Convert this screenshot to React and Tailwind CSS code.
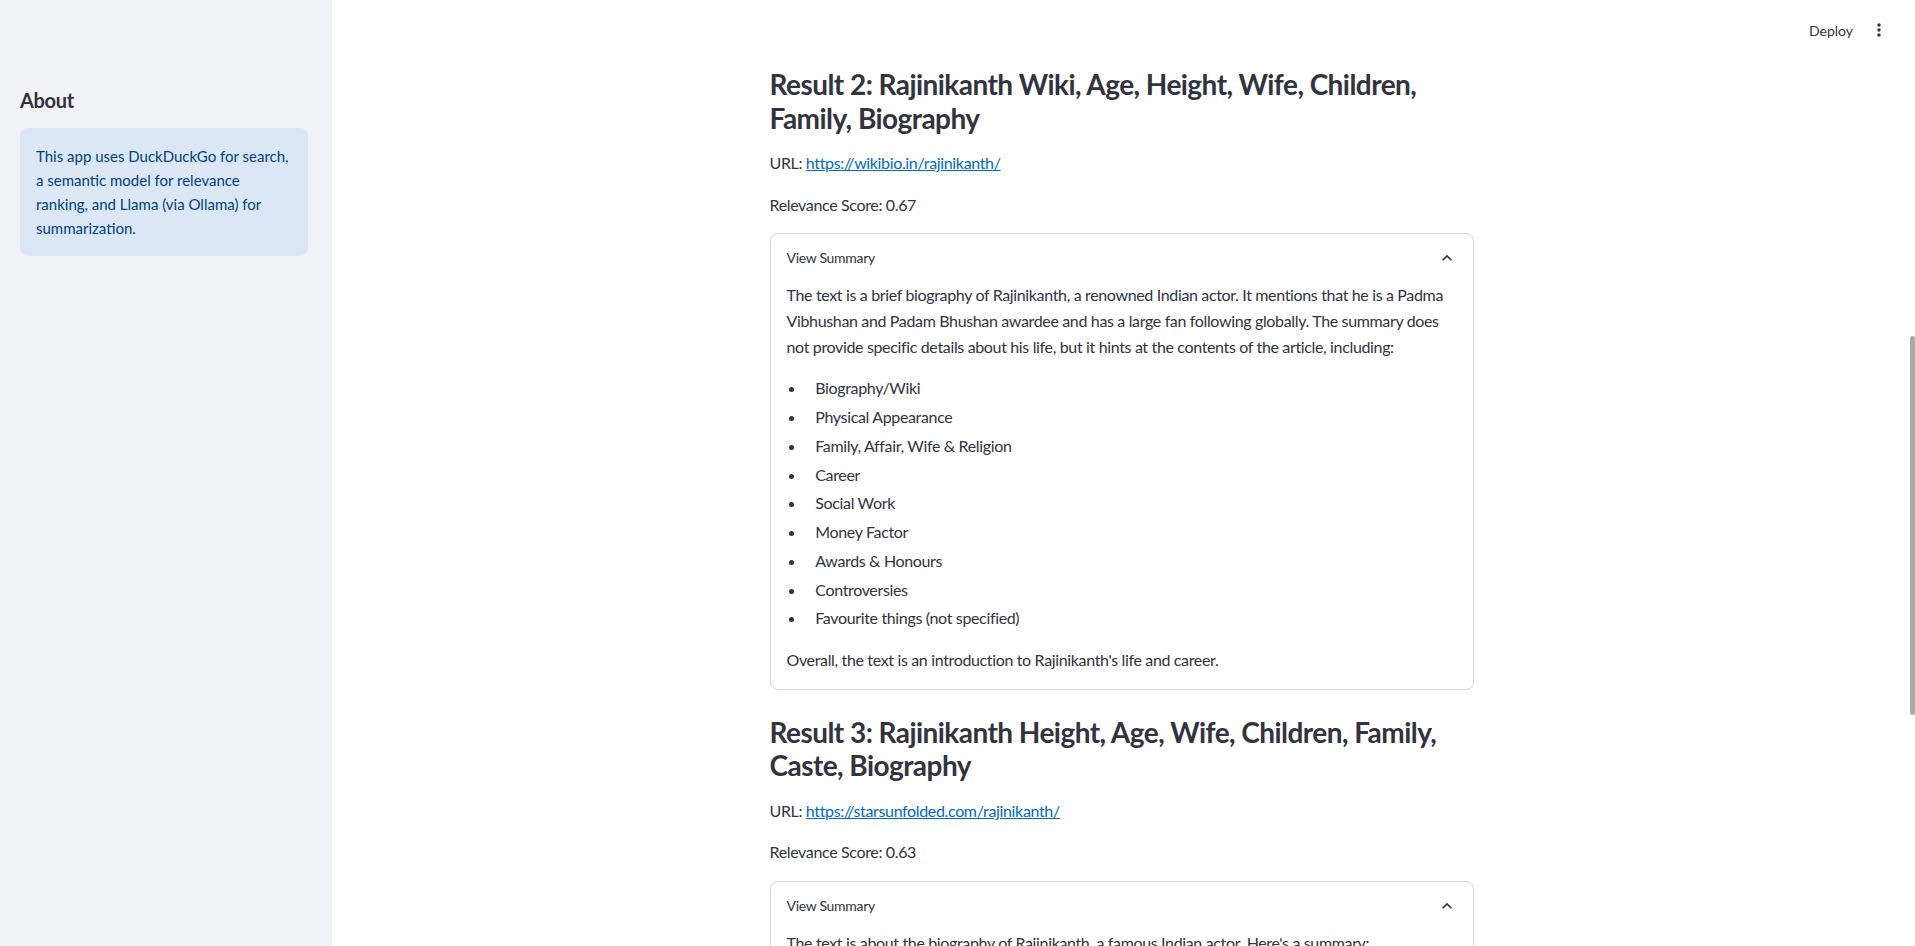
import React from "react";

const FONT = { fontFamily: 'Lato, "Noto Sans", "Liberation Sans", sans-serif' };

function Chevron() {
  return (
    <svg width="20" height="20" viewBox="0 0 24 24" fill="#31333f">
      <path d="M12 8l-6 6 1.41 1.41L12 10.83l4.59 4.58L18 14z" />
    </svg>
  );
}

function MoreVert() {
  return (
    <svg width="20" height="20" viewBox="0 0 24 24" fill="#31333f">
      <path d="M12 8c1.1 0 2-.9 2-2s-.9-2-2-2-2 .9-2 2 .9 2 2 2zm0 2c-1.1 0-2 .9-2 2s.9 2 2 2 2-.9 2-2-.9-2-2-2zm0 6c-1.1 0-2 .9-2 2s.9 2 2 2 2-.9 2-2-.9-2-2-2z" />
    </svg>
  );
}

function Expander({ children }) {
  return (
    <div className="rounded-lg border border-[#d6d6d9] bg-white">
      <div className="flex items-center justify-between px-4 pt-3 pb-3">
        <span className="text-[14px] leading-[24px] tracking-[-0.3px] text-[#31333f]">View Summary</span>
        <Chevron />
      </div>
      <div className="px-4 pb-4 text-[16px] leading-[25.6px] tracking-[-0.35px] text-[#31333f]">{children}</div>
    </div>
  );
}

function Bullets({ items }) {
  return (
    <ul className="mb-4 list-disc pl-0">
      {items.map((t) => (
        <li key={t} className="my-[3.2px] ml-[19.2px] pl-[9.6px]">
          {t}
        </li>
      ))}
    </ul>
  );
}

function Result({ title, url, score, children }) {
  return (
    <>
      <h3 className="pt-[10px] text-[28px] font-bold leading-[33.6px] tracking-[-0.55px] text-[#31333f]">{title}</h3>
      <p className="-mt-px text-[16px] leading-[25.6px] tracking-[-0.35px] text-[#31333f]">
        URL:{" "}
        <a href={url} className="text-[#0068c9] underline">
          {url}
        </a>
      </p>
      <p className="text-[16px] leading-[25.6px] tracking-[-0.35px] text-[#31333f]">Relevance Score: {score}</p>
      <Expander>{children}</Expander>
    </>
  );
}

export default function App() {
  return (
    <div className="flex h-[946px] w-full overflow-hidden bg-white" style={FONT}>
      <aside className="w-[332px] shrink-0 bg-[#f0f2f6] pl-5 pr-6 pt-[86px]">
        <h2 className="text-[20px] font-bold leading-[28px] tracking-[-0.3px] text-[#31333f]">About</h2>
        <div className="mt-[14px] rounded-lg bg-[#dbe7f4] px-4 py-4 text-[15px] leading-[24px] text-[#004280]">
          This app uses DuckDuckGo for search, a semantic model for relevance ranking, and Llama (via Ollama) for
          summarization.
        </div>
      </aside>

      <main className="relative flex-1 overflow-hidden pr-[4px]">
        <header className="absolute left-0 right-0 top-0 z-10 flex h-[60px] items-center justify-end gap-[16px] pr-[26px]">
          <span className="text-[14px] text-[#31333f]">Deploy</span>
          <MoreVert />
        </header>

        <div className="mx-auto flex w-[736px] flex-col gap-4 px-4 pt-[58px]">
          <Result
            title="Result 2: Rajinikanth Wiki, Age, Height, Wife, Children, Family, Biography"
            url="https://wikibio.in/rajinikanth/"
            score="0.67"
          >
            <p className="mb-4">
              The text is a brief biography of Rajinikanth, a renowned Indian actor. It mentions that he is a Padma
              Vibhushan and Padam Bhushan awardee and has a large fan following globally. The summary does not provide
              specific details about his life, but it hints at the contents of the article, including:
            </p>
            <Bullets
              items={[
                "Biography/Wiki",
                "Physical Appearance",
                "Family, Affair, Wife & Religion",
                "Career",
                "Social Work",
                "Money Factor",
                "Awards & Honours",
                "Controversies",
                "Favourite things (not specified)",
              ]}
            />
            <p>Overall, the text is an introduction to Rajinikanth's life and career.</p>
          </Result>

          <Result
            title="Result 3: Rajinikanth Height, Age, Wife, Children, Family, Caste, Biography"
            url="https://starsunfolded.com/rajinikanth/"
            score="0.63"
          >
            <p className="mb-4">The text is about the biography of Rajinikanth, a famous Indian actor. Here's a summary:</p>
            <Bullets items={["Early Life", "Career", "Family", "Awards"]} />
          </Result>
        </div>

        <div className="absolute right-0 top-[336px] h-[379px] w-[5px] rounded-full bg-[#a8a8ad]" />
      </main>
    </div>
  );
}
